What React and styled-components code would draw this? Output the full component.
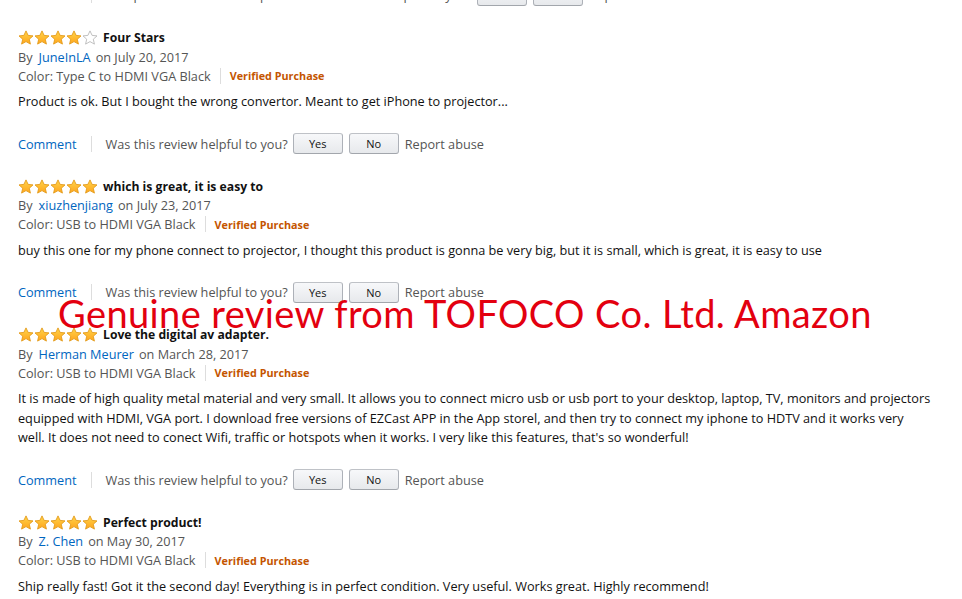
import React from "react";
import styled, { createGlobalStyle } from "styled-components";

const GlobalStyle = createGlobalStyle`
  html, body {
    margin: 0;
    padding: 0;
    background: #fff;
    overflow: hidden;
  }
  body {
    font-family: "Open Sans", "Noto Sans", sans-serif;
    color: #111;
  }
`;

const Page = styled.div`
  position: relative;
  width: 962px;
  height: 599px;
  overflow: hidden;
  padding-left: 18px;
  box-sizing: border-box;
`;

// the tail of the review above, cut off by the top edge
const Clipped = styled.div`
  margin-top: -37px;
`;

const Review = styled.div`
  padding-top: 21px;
`;

const TitleRow = styled.div`
  display: flex;
  align-items: center;
  height: 19px;
  gap: 5px;
`;

const Title = styled.span`
  font-size: 12.2px;
  font-weight: 700;
  color: #111;
`;

const Meta = styled.div`
  display: flex;
  align-items: center;
  height: 19px;
  font-size: 12.7px;
  color: #555;
`;

const Link = styled.span`
  color: #0066c0;
  margin: ${(p) => (p.$inline ? "0 5px 0 6px" : "0")};
`;

const Divider = styled.span`
  display: inline-block;
  width: 1px;
  height: 16px;
  background: #ddd;
  margin: 0 ${(p) => p.$space || 9}px;
`;

const Verified = styled.span`
  font-size: 10.8px;
  font-weight: 700;
  color: #c45500;
`;

const Body = styled.p`
  margin: 7px 0 0;
  font-size: 12.7px;
  line-height: 19.5px;
  color: #111;
  max-width: 914px;
`;

const Actions = styled.div`
  display: flex;
  align-items: center;
  height: 24px;
  margin-top: 20px;
  font-size: 12.7px;
  color: #555;
`;

const Note = styled.span`
  margin-right: 4px;
`;

const Button = styled.button`
  font-family: inherit;
  font-size: 11px;
  color: #111;
  width: 50px;
  height: 21px;
  padding: 0;
  margin-right: 6px;
  border: 1px solid #adb1b8;
  border-top-color: #bfc2c7;
  border-bottom-color: #a2a6ac;
  border-radius: 3px;
  background: linear-gradient(#f7f8fa, #e7e9ec);
  &:first-of-type {
    margin-left: 5px;
  }
`;

const Overlay = styled.div`
  position: absolute;
  left: 58px;
  top: 290px;
  font-family: Lato, sans-serif;
  font-size: 38px;
  color: #e3000f;
  white-space: nowrap;
  letter-spacing: 0.4px;
`;

const StarSvg = styled.svg`
  display: block;
`;

function Stars({ count }) {
  const path =
    "M8 0.9 L10.1 5.4 L15 5.9 L11.3 9.2 L12.4 14.1 L8 11.6 L3.6 14.1 L4.7 9.2 L1 5.9 L5.9 5.4 Z";
  return (
    <StarSvg width="80" height="15" viewBox="0 0 80 15">
      <defs>
        <linearGradient id="starFill" x1="0" y1="0" x2="0" y2="1">
          <stop offset="0" stopColor="#ffd54a" />
          <stop offset="1" stopColor="#ffa41c" />
        </linearGradient>
      </defs>
      {[0, 1, 2, 3, 4].map((i) => (
        <path
          key={i}
          d={path}
          transform={`translate(${i * 16} 0)`}
          fill={i < count ? "url(#starFill)" : "#fff"}
          stroke={i < count ? "#e39b1a" : "#b9b9b9"}
          strokeWidth="0.9"
          strokeLinejoin="round"
        />
      ))}
    </StarSvg>
  );
}

function ActionRow({ note }) {
  return (
    <Actions>
      <Link>Comment</Link>
      <Divider $space={14} />
      {note && <Note>{note}</Note>}
      <span>Was this review helpful to you?</span>
      <Button>Yes</Button>
      <Button>No</Button>
      <span>Report abuse</span>
    </Actions>
  );
}

const reviews = [
  {
    stars: 4,
    title: "Four Stars",
    author: "JuneInLA",
    date: "July 20, 2017",
    color: "Type C to HDMI VGA Black",
    body: "Product is ok. But I bought the wrong convertor. Meant to get iPhone to projector..."
  },
  {
    stars: 5,
    title: "which is great, it is easy to",
    author: "xiuzhenjiang",
    date: "July 23, 2017",
    color: "USB to HDMI VGA Black",
    body: "buy this one for my phone connect to projector, I thought this product is gonna be very big, but it is small, which is great, it is easy to use"
  },
  {
    stars: 5,
    title: "Love the digital av adapter.",
    author: "Herman Meurer",
    date: "March 28, 2017",
    color: "USB to HDMI VGA Black",
    body: "It is made of high quality metal material and very small. It allows you to connect micro usb or usb port to your desktop, laptop, TV, monitors and projectors equipped with HDMI, VGA port. I download free versions of EZCast APP in the App storel, and then try to connect my iphone to HDTV and it works very well. It does not need to conect Wifi, traffic or hotspots when it works. I very like this features, that's so wonderful!"
  },
  {
    stars: 5,
    title: "Perfect product!",
    author: "Z. Chen",
    date: "May 30, 2017",
    color: "USB to HDMI VGA Black",
    body: "Ship really fast! Got it the second day! Everything is in perfect condition. Very useful. Works great. Highly recommend!"
  }
];

export default function App() {
  return (
    <Page>
      <GlobalStyle />
      <Clipped>
        <ActionRow note="One person found this helpful." />
      </Clipped>
      {reviews.map((r, i) => (
        <Review key={i}>
          <TitleRow>
            <Stars count={r.stars} />
            <Title>{r.title}</Title>
          </TitleRow>
          <Meta>
            By<Link $inline>{r.author}</Link>on {r.date}
          </Meta>
          <Meta>
            Color: {r.color}
            <Divider />
            <Verified>Verified Purchase</Verified>
          </Meta>
          <Body>{r.body}</Body>
          {i < reviews.length - 1 && <ActionRow />}
        </Review>
      ))}
      <Overlay>Genuine review from TOFOCO Co. Ltd. Amazon</Overlay>
    </Page>
  );
}
